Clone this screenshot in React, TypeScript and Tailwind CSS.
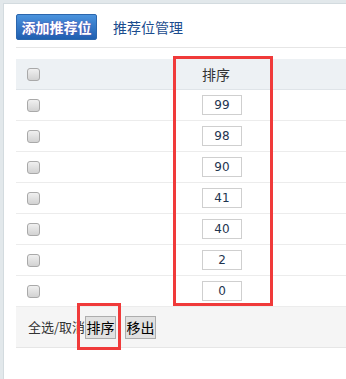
import React from "react";

const SORTS = [99, 98, 90, 41, 40, 2, 0];

const CJK = "font-['Microsoft_YaHei','Noto_Sans_CJK_SC',sans-serif]";

function Box() {
    return (
        <span className="block h-[13px] w-[13px] rounded-[3px] border border-[#a9a9a9] bg-gradient-to-b from-[#f0f0f0] to-[#d2d2d2]" />
    );
}

export default function App() {
    return (
        <div className={`relative h-[379px] w-[346px] overflow-hidden bg-[#e2e8eb] pl-[3px] pt-[3px] ${CJK}`}>
            <div className="h-full border-l border-t border-[#d3dbdf] bg-white pl-[12px] pt-[10px]">
                {/* 顶部标签 */}
                <div className="flex items-center border-b border-[#e6e6e6] pb-[7px]">
                    <button
                        type="button"
                        className="h-[26px] w-[81px] rounded-[2px] border border-[#2b66ad] bg-gradient-to-b from-[#4b93dd] to-[#1f5fb0] text-[14px] font-bold leading-[24px] text-white [text-shadow:0_0_2px_#6a4fb5]"
                    >
                        添加推荐位
                    </button>
                    <span className="ml-[16px] text-[14px] text-[#1b4c8e]">推荐位管理</span>
                </div>

                {/* 列表 */}
                <div className="mt-[11px]">
                    <div className="grid h-[31px] grid-cols-[186px_1fr] items-center border-b border-[#dfe4e8] bg-[#edf1f4]">
                        <div className="pl-[11px]">
                            <Box />
                        </div>
                        <div className="text-[14px] text-[#333]">排序</div>
                    </div>
                    {SORTS.map((n) => (
                        <div
                            key={n}
                            className="grid h-[31px] grid-cols-[186px_1fr] items-center border-b border-[#ececec]"
                        >
                            <div className="pl-[11px]">
                                <Box />
                            </div>
                            <div>
                                <input
                                    readOnly
                                    value={n}
                                    className="block h-[20px] w-[40px] border border-[#cfcfcf] bg-white text-center font-['DejaVu_Sans',sans-serif] text-[12px] text-[#1f3550] outline-none"
                                />
                            </div>
                        </div>
                    ))}
                    <div className="flex h-[41px] items-center border-b border-[#e6e6e6] bg-[#f5f5f5] pl-[12px]">
                        <span className="whitespace-nowrap text-[13px] text-[#333]">全选/取消</span>
                        <button
                            type="button"
                            className="h-[23px] w-[31px] border border-[#adadad] bg-[#e1e1e1] text-[14px] leading-[20px] text-black"
                        >
                            排序
                        </button>
                        <button
                            type="button"
                            className="ml-[9px] h-[23px] w-[31px] border border-[#adadad] bg-[#e1e1e1] text-[14px] leading-[20px] text-black"
                        >
                            移出
                        </button>
                    </div>
                </div>
            </div>

            {/* 标注红框 */}
            <div className="pointer-events-none absolute left-[173px] top-[56px] h-[250px] w-[100px] border-[3px] border-[#f03a3a]" />
            <div className="pointer-events-none absolute left-[77px] top-[303px] h-[47px] w-[44px] border-[3px] border-[#f03a3a]" />
        </div>
    );
}
